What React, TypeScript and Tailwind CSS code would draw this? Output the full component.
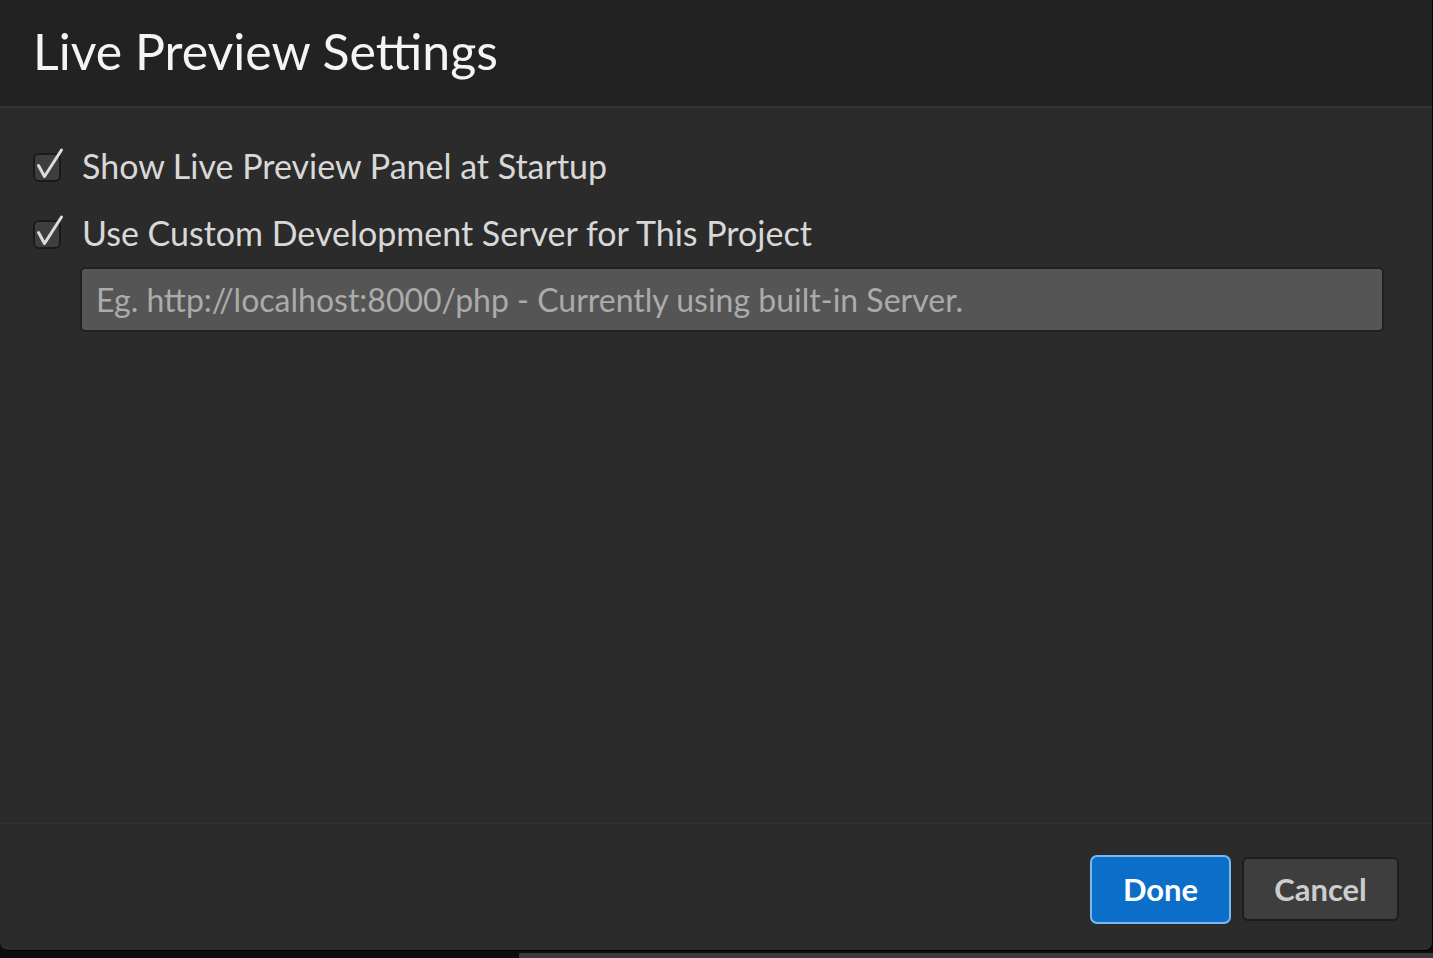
import React from 'react';

const FONT = { fontFamily: 'Lato, "Noto Sans", sans-serif' };

function CheckMark() {
  return (
    <div className="relative w-[28px] h-[29px] shrink-0">
      <div className="absolute inset-0 rounded-[6px] bg-[#3e3e3e] border-2 border-[#1a1a1a]" />
      <svg className="absolute left-0 top-[-6px] w-[32px] h-[36px]" viewBox="0 0 32 36" fill="none">
        <path d="M5.5 18.5 L11.5 29.5 L28.5 3" stroke="#dcdcdc" strokeWidth="3" strokeLinecap="round" strokeLinejoin="round" />
      </svg>
    </div>
  );
}

function CheckRow({ label }: { label: string }) {
  return (
    <div className="flex items-center h-[40px] gap-[21px]">
      <CheckMark />
      <span className="text-[34px] text-[#d8d8d8] leading-none pb-[2px]">{label}</span>
    </div>
  );
}

export default function App() {
  return (
    <div className="h-screen w-full bg-[#0c0c0c] flex flex-col overflow-hidden" style={FONT}>
      {/* dialog */}
      <div className="flex-1 flex flex-col bg-[#2b2b2b] rounded-b-[8px] border-b border-r border-black overflow-hidden">
        <div className="h-[108px] shrink-0 bg-[#222222] border-b-2 border-[#353535] flex items-center pl-[33px] pb-[4px]">
          <h1 className="text-[50px] text-[#f4f4f4] leading-none">Live Preview Settings</h1>
        </div>

        <div className="flex-1 pt-[39px] pl-[33px] pr-[48px] flex flex-col">
          <CheckRow label="Show Live Preview Panel at Startup" />
          <div className="h-[27px]" />
          <CheckRow label="Use Custom Development Server for This Project" />
          <input
            className="mt-[13px] ml-[47px] h-[65px] rounded-[5px] bg-[#555555] border-2 border-[#202020] pl-[14px] text-[32px] text-[#dddddd] placeholder:text-[#ababab] outline-none"
            placeholder="Eg. http://localhost:8000/php - Currently using built-in Server."
          />
        </div>

        <div className="h-[127px] shrink-0 border-t border-[#323232] flex items-center justify-end pr-[33px] pt-[4px] gap-[11px]">
          <button className="w-[141px] h-[69px] rounded-[7px] bg-[#0b6ec9] border-2 border-[#7ab9f0] text-white text-[31px] font-bold">
            Done
          </button>
          <button className="w-[157px] h-[64px] rounded-[6px] bg-[#3e3e3e] border-2 border-[#1d1d1d] text-[#cdcdcd] text-[31px] font-bold">
            Cancel
          </button>
        </div>
      </div>
      <div className="h-[7px] shrink-0 flex">
        <div className="ml-[519px] mt-[2px] flex-1 bg-[#3a3a3a]" />
      </div>
    </div>
  );
}
